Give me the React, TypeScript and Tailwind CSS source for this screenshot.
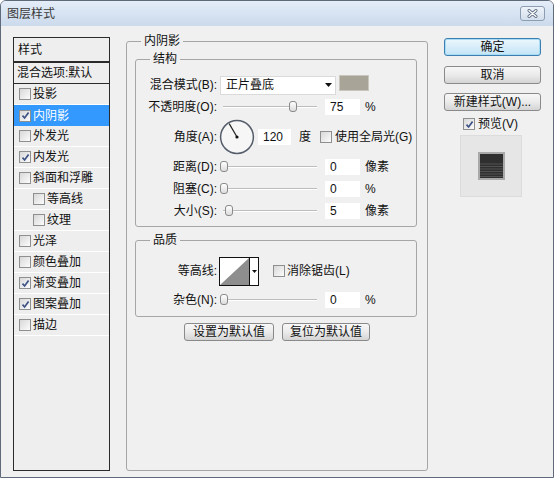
import React from 'react'

type Item = { label: string; checked?: boolean; selected?: boolean; indent?: boolean }

const styleItems: Item[] = [
  { label: '投影' },
  { label: '内阴影', checked: true, selected: true },
  { label: '外发光' },
  { label: '内发光', checked: true },
  { label: '斜面和浮雕' },
  { label: '等高线', indent: true },
  { label: '纹理', indent: true },
  { label: '光泽' },
  { label: '颜色叠加' },
  { label: '渐变叠加', checked: true },
  { label: '图案叠加', checked: true },
  { label: '描边' },
]

function Check({ checked }: { checked?: boolean }) {
  return (
    <span className="flex h-[12px] w-[12px] shrink-0 items-center justify-center border border-[#8e8f8f] bg-linear-to-br from-[#d8d8d8] to-[#fcfcfc]">
      {checked && (
        <svg width="9" height="9" viewBox="0 0 9 9">
          <path d="M1.5 4.6 L3.6 7 L7.6 1.6" fill="none" stroke="#3d5185" strokeWidth="1.7" />
        </svg>
      )}
    </span>
  )
}

function Slider({ pos }: { pos: number }) {
  return (
    <div className="relative h-[12px] w-[97px]">
      <div className="absolute left-[3px] right-0 top-[5px] h-[2px] border-t border-[#bdbdbd] bg-white" />
      <div
        className="absolute top-0 h-[11px] w-[8px] rounded-[3px] border border-[#8a8a8a] bg-linear-to-b from-white to-[#dcdcdc]"
        style={{ left: pos }}
      />
    </div>
  )
}

function SliderRow({ label, pos, value, unit }: { label: string; pos: number; value: string; unit: string }) {
  return (
    <div className="flex h-[22px] items-center">
      <span className="w-[81px] text-right">{label}</span>
      <div className="ml-[3px]">
        <Slider pos={pos} />
      </div>
      <div className="ml-[8px] flex h-[16px] w-[35px] items-center bg-white pl-[5px]">{value}</div>
      <span className="ml-[5px]">{unit}</span>
    </div>
  )
}

function WinButton({ children, primary }: { children: React.ReactNode; primary?: boolean }) {
  return (
    <button
      className={
        primary
          ? 'flex h-[18px] w-full items-center justify-center rounded-[3px] border border-[#3c7fb1] bg-linear-to-b from-[#ecf7fd] to-[#c3e4f6] leading-none shadow-[inset_0_0_0_1px_#a8dcf6]'
          : 'flex h-[18px] w-full items-center justify-center rounded-[3px] border border-[#8a8a8a] bg-linear-to-b from-[#f7f7f7] via-[#ebebeb] to-[#d4d4d4] leading-none'
      }
    >
      {children}
    </button>
  )
}

export default function App() {
  return (
    <div className="flex h-[478px] w-[554px] flex-col overflow-hidden rounded-t-[6px] border border-[#5f6b7b] bg-[#f0f0f0] font-['Liberation_Sans','Noto_Sans_CJK_SC',sans-serif] text-[12px] leading-[16px] text-[#111]">
      {/* title bar */}
      <div className="flex h-[25px] shrink-0 items-center bg-linear-to-b from-[#e4edf8] to-[#cbdaec] pl-[6px] pr-[8px]">
        <span className="text-[#3a3a3a]">图层样式</span>
        <div className="ml-auto flex h-[15px] w-[25px] items-center justify-center rounded-[3px] border border-[#8d9db2] bg-linear-to-b from-[#eef3f9] to-[#d3dfec]">
          <svg width="11" height="9" viewBox="0 0 11 9">
            <path d="M2 1.5 L9 7.5 M9 1.5 L2 7.5" stroke="#5e6e84" strokeWidth="3" strokeLinecap="round" />
            <path d="M2 1.5 L9 7.5 M9 1.5 L2 7.5" stroke="#ffffff" strokeWidth="1.3" strokeLinecap="round" />
          </svg>
        </div>
      </div>

      <div className="flex flex-1 items-start pl-[12px]">
        {/* style list */}
        <div className="mt-[11px] flex h-[434px] w-[97px] flex-col border border-[#2b2b2b] bg-[#eeeeee]">
          <div className="flex h-[25px] items-center border-b-2 border-[#2b2b2b] pl-[4px]">样式</div>
          <div className="flex h-[21px] items-center border-b border-[#2b2b2b] pl-[3px]">混合选项:默认</div>
          {styleItems.map((it) => (
            <div
              key={it.label}
              className={
                (it.selected ? 'bg-[#3399ff] text-white ' : 'border-b border-white ') +
                (it.indent ? 'flex h-[21px] items-center pl-[19px]' : 'flex h-[21px] items-center pl-[5px]')
              }
            >
              <Check checked={it.checked} />
              <span className="ml-[2px]">{it.label}</span>
            </div>
          ))}
        </div>

        {/* main panel */}
        <fieldset className="ml-[16px] mt-[7px] h-[438px] w-[302px] rounded-[3px] border border-[#a6a6a6]">
          <legend className="ml-[14px] px-[3px] leading-[16px]">内阴影</legend>
          <div className="flex flex-col pl-[8px]">
            <fieldset className="mt-[2px] w-[282px] rounded-[3px] border border-[#a6a6a6] pb-[4px]">
              <legend className="ml-[14px] px-[3px] leading-[16px]">结构</legend>
              <div className="mt-[8px] flex h-[20px] items-center">
                <span className="w-[81px] text-right">混合模式(B):</span>
                <div className="ml-[3px] flex h-[19px] w-[116px] items-center border border-[#dadada] bg-white pl-[5px]">
                  <span>正片叠底</span>
                  <svg className="ml-auto mr-[3px]" width="7" height="4" viewBox="0 0 7 4">
                    <path d="M0 0 H7 L3.5 4 Z" fill="#111" />
                  </svg>
                </div>
                <div className="mb-[4px] ml-[3px] h-[16px] w-[30px] border border-[#c9c6bd] bg-[#a8a497]" />
              </div>
              <div className="mt-[1px]">
                <SliderRow label="不透明度(O):" pos={69} value="75" unit="%" />
              </div>
              <div className="flex h-[38px] items-center">
                <span className="w-[81px] text-right">角度(A):</span>
                <svg className="ml-[2px]" width="36" height="36" viewBox="0 0 36 36">
                  <circle cx="18" cy="18" r="16.4" fill="#f6f6f6" stroke="#555d6b" strokeWidth="1.5" />
                  <line x1="18" y1="18" x2="10.2" y2="4.6" stroke="#222" strokeWidth="1.2" />
                  <circle cx="18" cy="18" r="1.6" fill="#111" />
                </svg>
                <div className="ml-[3px] flex h-[16px] w-[33px] items-center bg-white pl-[5px]">120</div>
                <span className="ml-[8px]">度</span>
                <div className="ml-[9px]">
                  <Check />
                </div>
                <span className="ml-[3px]">使用全局光(G)</span>
              </div>
              <SliderRow label="距离(D):" pos={0} value="0" unit="像素" />
              <SliderRow label="阻塞(C):" pos={0} value="0" unit="%" />
              <SliderRow label="大小(S):" pos={5} value="5" unit="像素" />
            </fieldset>

            <fieldset className="mt-[5px] w-[282px] rounded-[3px] border border-[#a6a6a6] pb-[5px]">
              <legend className="ml-[14px] px-[3px] leading-[16px]">品质</legend>
              <div className="mt-[8px] flex h-[30px] items-center">
                <span className="w-[81px] text-right">等高线:</span>
                <div className="ml-[2px] flex h-[29px]">
                  <div className="h-[29px] w-[31px] border border-[#111] bg-white">
                    <svg width="29" height="27" viewBox="0 0 29 27">
                      <polygon points="0,27 29,0 29,27" fill="#8e8e8e" />
                    </svg>
                  </div>
                  <div className="flex h-[29px] w-[9px] items-center justify-center border border-l-0 border-[#111] bg-white">
                    <svg width="5" height="3" viewBox="0 0 5 3">
                      <path d="M0 0 H5 L2.5 3 Z" fill="#111" />
                    </svg>
                  </div>
                </div>
                <div className="ml-[14px]">
                  <Check />
                </div>
                <span className="ml-[2px]">消除锯齿(L)</span>
              </div>
              <div className="mt-[3px]">
                <SliderRow label="杂色(N):" pos={0} value="0" unit="%" />
              </div>
            </fieldset>

            <div className="mt-[6px] flex justify-center gap-[8px] pr-[8px]">
              <div className="w-[90px]">
                <WinButton>设置为默认值</WinButton>
              </div>
              <div className="w-[88px]">
                <WinButton>复位为默认值</WinButton>
              </div>
            </div>
          </div>
        </fieldset>

        {/* right column */}
        <div className="ml-[16px] mt-[12px] flex w-[97px] flex-col">
          <WinButton primary>确定</WinButton>
          <div className="mt-[10px]">
            <WinButton>取消</WinButton>
          </div>
          <div className="mt-[9px]">
            <WinButton>新建样式(W)...</WinButton>
          </div>
          <div className="mt-[5px] flex h-[16px] items-center pl-[19px]">
            <Check checked />
            <span className="ml-[3px]">预览(V)</span>
          </div>
          <div className="ml-[16px] mt-[3px] flex h-[62px] w-[62px] items-center justify-center border border-[#dcdcdc] bg-[#e6e6e6]">
            <svg width="27" height="28" viewBox="0 0 27 28">
              <rect x="0" y="0" width="27" height="28" fill="#a9a9a9" />
              <rect x="2" y="2" width="23" height="24" fill="#2f2f2f" />
              <g stroke="#5a5a5a" strokeWidth="0.8">
                <line x1="2" y1="12" x2="25" y2="12" />
                <line x1="2" y1="14.5" x2="25" y2="14.5" />
                <line x1="2" y1="17" x2="25" y2="17" />
                <line x1="2" y1="19.5" x2="25" y2="19.5" />
                <line x1="2" y1="22" x2="25" y2="22" />
                <line x1="2" y1="24.5" x2="25" y2="24.5" />
              </g>
            </svg>
          </div>
        </div>
      </div>
    </div>
  )
}
